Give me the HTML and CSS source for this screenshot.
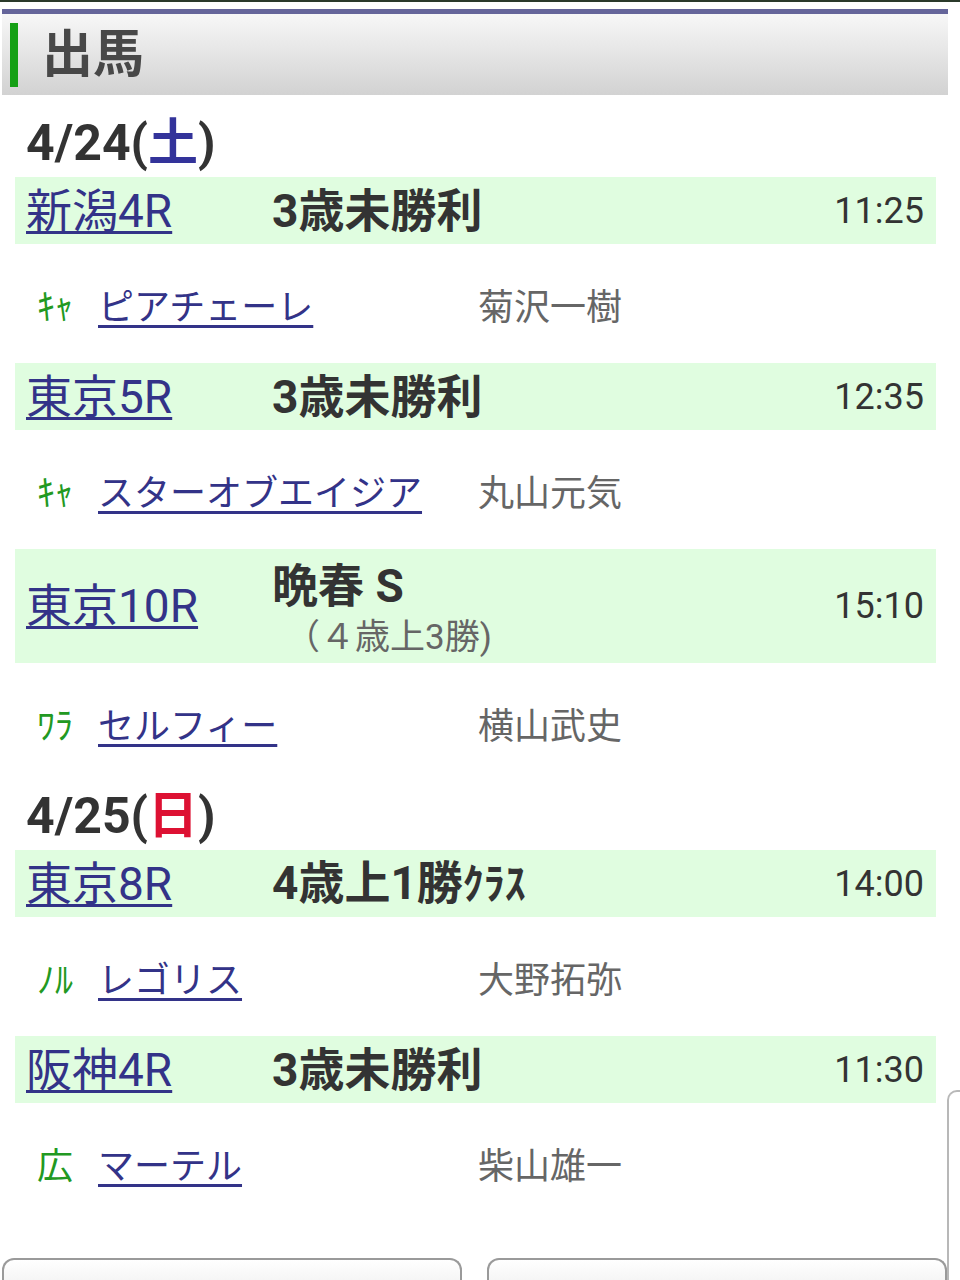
FILE: index.html
```html
<!DOCTYPE html>
<html lang="ja">
<head>
<meta charset="utf-8">
<title>出馬</title>
<link rel="stylesheet" href="styles.css">
</head>
<body>
<div class="topline"></div>
<div class="page">
  <div class="header"><span class="hbar"></span><h1 class="htitle">出馬</h1></div>
  <div class="content">
    <div class="date">4/24(<span class="sat">土</span>)</div>
    <div class="race"><a class="rlink" href="#">新潟4R</a><div class="rname">3歳未勝利</div><div class="rtime">11:25</div></div>
    <div class="horse"><span class="mark">ｷｬ</span><a class="hlink" href="#">ピアチェーレ</a><span class="jockey">菊沢一樹</span></div>
    <div class="race"><a class="rlink" href="#">東京5R</a><div class="rname">3歳未勝利</div><div class="rtime">12:35</div></div>
    <div class="horse"><span class="mark">ｷｬ</span><a class="hlink" href="#">スターオブエイジア</a><span class="jockey">丸山元気</span></div>
    <div class="race tall"><a class="rlink" href="#">東京10R</a><div class="rname two"><div>晩春 S</div><div class="rsub">（４歳上3勝)</div></div><div class="rtime">15:10</div></div>
    <div class="horse"><span class="mark">ﾜﾗ</span><a class="hlink" href="#">セルフィー</a><span class="jockey">横山武史</span></div>
    <div class="date">4/25(<span class="sun">日</span>)</div>
    <div class="race"><a class="rlink" href="#">東京8R</a><div class="rname">4歳上1勝<span class="hw">ｸﾗｽ</span></div><div class="rtime">14:00</div></div>
    <div class="horse"><span class="mark">ﾉﾙ</span><a class="hlink" href="#">レゴリス</a><span class="jockey">大野拓弥</span></div>
    <div class="race"><a class="rlink" href="#">阪神4R</a><div class="rname">3歳未勝利</div><div class="rtime">11:30</div></div>
    <div class="horse"><span class="mark">広</span><a class="hlink" href="#">マーテル</a><span class="jockey">柴山雄一</span></div>
  </div>
  <div class="buttons"><div class="btn"></div><div class="btn"></div></div>
</div>
<div class="edge"></div>
</body>
</html>
```

FILE: styles.css
```css
html, body {
  margin: 0;
  padding: 0;
  background: #ffffff;
}
body {
  width: 960px;
  height: 1280px;
  overflow: hidden;
  position: relative;
  font-family: Roboto, "Noto Sans CJK JP", sans-serif;
  color: #333333;
}
.topline {
  height: 2px;
  background: #2b3a2b;
}
.page {
  padding: 0 12px 0 2px;
}
.header {
  margin-top: 7px;
  border-top: 5px solid #65659a;
  height: 81px;
  background: linear-gradient(#f7f7f7, #d2d2d2);
  display: flex;
  align-items: center;
}
.hbar {
  width: 8px;
  height: 64px;
  margin-left: 8px;
  background: #15a015;
}
.htitle {
  margin: 0 0 0 24px;
  font-size: 51px;
  font-weight: bold;
  color: #484848;
  line-height: 1;
}
.content {
  padding: 0 12px 0 13px;
}
.date {
  height: 68px;
  line-height: 68px;
  padding-left: 11px;
  font-size: 50px;
  font-weight: bold;
  color: #333333;
}
.content > .date:first-child {
  margin-top: 14px;
}
.sat { color: #33339a; }
.sun { color: #dd1133; }
.race {
  height: 67px;
  background: #e0fde0;
  display: flex;
  align-items: center;
  padding: 0 12px 0 11px;
}
.race.tall {
  height: 114px;
}
.rlink {
  width: 246px;
  font-size: 46px;
  color: #333388;
  text-decoration: underline;
  text-decoration-thickness: 3px;
  text-underline-offset: 4px;
  line-height: 1;
}
.rname {
  flex: 1;
  font-size: 46px;
  font-weight: bold;
  color: #333333;
  line-height: 50px;
}
.rname.two {
  line-height: 52px;
  padding-top: 12px;
}
.hw {
  font-size: 42px;
}
.rsub {
  font-size: 35px;
  font-weight: normal;
  color: #666666;
  margin-left: 13px;
}
.rtime {
  font-size: 36px;
  color: #333333;
}
.horse {
  height: 119px;
  display: flex;
  align-items: center;
  padding-left: 22px;
}
.mark {
  width: 61px;
  font-size: 36px;
  color: #229922;
}
.hlink {
  width: 380px;
  font-size: 36px;
  color: #333388;
  text-decoration: underline;
  text-decoration-thickness: 3px;
  text-underline-offset: 5px;
}
.jockey {
  font-size: 36px;
  color: #666666;
}
.buttons {
  margin-top: 36px;
  display: flex;
  gap: 25px;
}
.btn {
  width: 456px;
  height: 40px;
  border: 2px solid #9a9a9a;
  border-bottom: none;
  border-radius: 12px 12px 0 0;
  background: linear-gradient(#ffffff, #ececec);
}
.edge {
  position: absolute;
  left: 947px;
  top: 1090px;
  width: 20px;
  height: 200px;
  border-left: 2px solid #b8b8b8;
  border-top: 2px solid #b8b8b8;
  border-radius: 10px 0 0 0;
}
```
